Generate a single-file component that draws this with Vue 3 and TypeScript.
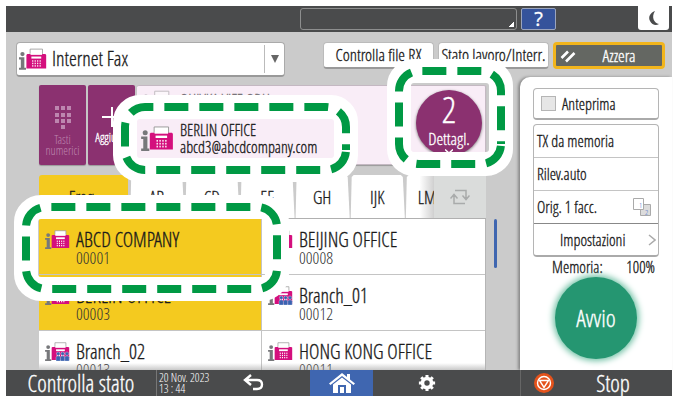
<script setup lang="ts">
import { ref, h, type FunctionalComponent } from 'vue'

interface Contact { name: string; code: string; group?: boolean; selected?: boolean }

const contacts: Contact[] = [
  { name: 'ABCD COMPANY', code: '00001', selected: true },
  { name: 'BEIJING OFFICE', code: '00008' },
  { name: 'BERLIN OFFICE', code: '00003', selected: true },
  { name: 'Branch_01', code: '00012', group: true },
  { name: 'Branch_02', code: '00013', group: true },
  { name: 'HONG KONG OFFICE', code: '00011' },
]
const tabs: string[] = ['AB', 'CD', 'EF', 'GH', 'IJK']
const modes: string[] = ['TX da memoria', 'Rilev.auto']
const preview = ref(false)
const line = ref('Internet Fax')

/* Fax machine with an "i" mark; group entries get three blue figures */
const FaxIcon: FunctionalComponent<{ group?: boolean }> = (props) => {
  const keys = [14.5, 17.5, 20.5].flatMap((y) =>
    [17, 20, 23, 26].map((x) => h('rect', { x: x - 1, y, width: 1.4, height: 1.8, fill: '#fff' })))
  const people = [18, 24, 30].flatMap((x) => [
    h('circle', { cx: x, cy: 16, r: 2.4, fill: '#3a62b0', stroke: '#fff', 'stroke-width': 0.4 }),
    h('path', { d: `M${x - 3} 26v-5q0-2 3-2t3 2v5z`, fill: '#3a62b0', stroke: '#fff', 'stroke-width': 0.4 }),
  ])
  return h('svg', { viewBox: '0 0 34 26', 'aria-hidden': 'true' }, [
    h('g', { fill: '#77787b' }, [
      h('circle', { cx: 4.2, cy: 7, r: 2.6 }),
      h('path', { d: 'M0 11h6.500v12.500h2v2.500H0v-2.500h2.200v-10H0z' }),
    ]),
    h('path', { d: 'M13.500 8V1h15v7', fill: '#fff', stroke: '#999', 'stroke-width': 1 }),
    h('path', { d: 'M10 7h22l1 1v16.500H9V8z', fill: '#d40f7d' }),
    h('path', { d: 'M14 6h14v2H14z', fill: '#fff' }),
    h('path', { d: 'M15 10h12v2.500H15z', fill: '#fff' }),
    ...keys,
    ...(props.group ? people : []),
  ])
}
FaxIcon.props = { group: Boolean }
</script>

<template>
  <main class="screen">
    <header class="top">
      <button class="message" aria-label="Messaggi"></button>
      <button class="help" aria-label="Guida">?</button>
      <button class="sleep" aria-label="Risparmio energia">
        <svg viewBox="0 0 12 16"><path d="M7 1C2 3 0 7 2 11s6 5 9 3C6 13 3 7 7 1z" fill="#4a4b4c" /></svg>
      </button>
    </header>

    <div class="actions">
      <label class="line">
        <FaxIcon />
        <select v-model="line" aria-label="Linea"><option>Internet Fax</option></select>
      </label>
      <div class="buttons">
        <button class="light">Controlla file RX</button>
        <button class="light">Stato lavoro/Interr.</button>
        <button class="reset">
          <svg viewBox="0 0 16 14"><path d="M1.500 9L8 2.500M6 12.500L14.500 4" stroke="#fff" stroke-width="2.600" /></svg>
          <span>Azzera</span>
        </button>
      </div>
    </div>

    <div class="body">
      <section class="work">
        <div class="dest">
          <button class="tile dim">
            <svg viewBox="0 0 18 24" class="pad">
              <path d="M1 0h4v4H1zM7 0h4v4H7zM13 0h4v4h-4zM1 7h4v4H1zM7 7h4v4H7zM13 7h4v4h-4zM1 13h4v4H1zM7 13h4v4H7zM13 13h4v4h-4zM7 19h4v4H7z" fill="#bd86af" />
            </svg>
            <span>Tasti<br />numerici</span>
          </button>
          <button class="tile">
            <svg viewBox="0 0 20 20" class="plus"><path d="M10 0v20M0 10h20" stroke="#fff" stroke-width="2" /></svg>
            <span>Aggiungi</span>
          </button>
          <div class="current">
            <div class="faded"><FaxIcon /><span>OHIVKA VIFE ODU</span></div>
            <button class="details">
              <b>2</b><span>Dettagl.</span>
              <svg viewBox="0 0 8 5"><path d="M0 .5l4 3.500 4-3.500" fill="none" stroke="#fff" stroke-width="1.500" /></svg>
            </button>
          </div>
        </div>

        <nav class="tabs">
          <button class="freq">Freq.</button>
          <button v-for="t in tabs" :key="t" class="tab">{{ t }}</button>
          <button class="tab last">LM</button>
          <button class="swap" aria-label="Cambia titolo">
            <svg viewBox="0 0 20 16" fill="none" stroke="#a9abab" stroke-width="1.500">
              <path d="M5 1.500h11v8M12.500 6.500l3.500 4 3.500-4M15 14.500H4v-8M.5 9.500L4 5.500l3.500 4" />
            </svg>
          </button>
        </nav>

        <div class="list">
          <button v-for="c in contacts" :key="c.code" class="contact" :class="{ selected: c.selected }">
            <FaxIcon :group="c.group" />
            <span class="name">{{ c.name }}</span>
            <span class="code">{{ c.code }}</span>
          </button>
        </div>
      </section>
      <div class="scroll"><i></i></div>

      <aside class="side">
        <label class="preview"><input v-model="preview" type="checkbox" />Anteprima</label>
        <div class="options">
          <button v-for="m in modes" :key="m">{{ m }}</button>
          <button>
            Orig. 1 facc.
            <svg viewBox="0 0 18 18" class="pages">
              <path d="M7.500 6.500h10v11h-10z" fill="#dcdcdc" stroke="#aaa" />
              <path d="M.5.5h10v11H.5z" fill="#fff" stroke="#aaa" />
              <text x="6" y="10" font-size="8" fill="#3f66c8">1</text>
              <text x="12" y="17" font-size="8" fill="#3f66c8">2</text>
            </svg>
          </button>
          <button class="settings">
            Impostazioni
            <svg viewBox="0 0 8 12" class="more"><path d="M1 1l6 5-6 5" fill="none" stroke="#aaa" stroke-width="1.500" /></svg>
          </button>
        </div>
        <p class="memory"><span>Memoria:</span><span>100%</span></p>
        <button class="start">Avvio</button>
      </aside>
    </div>

    <footer class="bottom">
      <button class="status">Controlla stato</button>
      <time class="date">20 Nov. 2023<br />13 : 44</time>
      <button class="back" aria-label="Indietro">
        <svg viewBox="0 0 22 18" fill="none" stroke="#fff" stroke-width="2.400"><path d="M9 1L3 6l6 5M3 6h12q5 0 5 4.500t-5 4.500h-4" /></svg>
      </button>
      <button class="home" aria-label="Home">
        <svg viewBox="0 0 26 20" fill="#fff">
          <path d="M13 0l5 4V1h3v5.500l5 4-1.500 1.500L13 3 1.500 12 0 10.500z" />
          <path d="M4 11.500L13 4.500l9 7V20h-5v-8H9v8H4zM11 14h4v6h-4z" />
        </svg>
      </button>
      <button class="gear" aria-label="Impostazioni">
        <svg viewBox="0 0 20 20">
          <circle cx="10" cy="10" r="5" fill="none" stroke="#fff" stroke-width="4" />
          <g stroke="#fff" stroke-width="3.400">
            <path d="M10 1v3M10 16v3M1 10h3M16 10h3M3.600 3.600l2.200 2.200M14.200 14.200l2.200 2.200M3.600 16.400l2.200-2.200M14.200 5.800l2.200-2.200" />
          </g>
        </svg>
      </button>
      <button class="stop">
        <svg viewBox="0 0 20 20">
          <circle cx="10" cy="10" r="10" fill="#e4521b" />
          <circle cx="10" cy="10" r="6.500" fill="none" stroke="#fff" stroke-width="1.400" />
          <path d="M5.500 7.500h9L10 14.500z" fill="none" stroke="#fff" stroke-width="1.400" />
        </svg>
        <span>Stop</span>
      </button>
    </footer>

    <div class="callout berlin">
      <svg width="245" height="87" aria-hidden="true">
        <rect x="12" y="12" width="221" height="63" rx="15" fill="#f9edf7" stroke="#fff" stroke-width="24" />
        <path class="dash" d="M233 55a20 20 0 0 1-20 20H32a20 20 0 0 1-20-20V32a20 20 0 0 1 20-20H213a20 20 0 0 1 20 20z" />
      </svg>
      <div class="magnified">
        <FaxIcon />
        <p>BERLIN OFFICE<br />abcd3@abcdcompany.com</p>
      </div>
    </div>
    <svg class="callout count" width="126" height="117" aria-hidden="true">
      <rect x="12" y="12" width="102" height="93" rx="15" fill="none" stroke="#fff" stroke-width="24" />
      <path class="dash" d="M114 85a20 20 0 0 1-20 20H32a20 20 0 0 1-20-20V32a20 20 0 0 1 20-20H94a20 20 0 0 1 20 20z" />
    </svg>
    <svg class="callout first" width="275" height="106" aria-hidden="true">
      <rect x="12" y="12" width="251" height="82" rx="15" fill="none" stroke="#fff" stroke-width="24" />
      <path class="dash" d="M263 74a20 20 0 0 1-20 20H32a20 20 0 0 1-20-20V32a20 20 0 0 1 20-20H243a20 20 0 0 1 20 20z" />
    </svg>
  </main>
</template>

<style>
body { background: #fff; }
</style>

<style scoped>
* { box-sizing: border-box; }
.screen {
  position: relative;
  display: flex;
  flex-direction: column;
  height: 100vh;
  padding: 6px 3px 4px 6px;
  font-family: 'Open Sans Condensed Light', 'Open Sans Condensed', 'Roboto Condensed', sans-serif;
  font-weight: 300;
  font-size: 16px;
  line-height: 20px;
  color: #1b1b1b;
  -webkit-text-stroke: 0.3px currentColor;
}
button, select, input { font: inherit; color: inherit; margin: 0; padding: 0; border: 0; background: none; }
p { margin: 0; }
svg { display: block; flex: none; }

.top { display: flex; height: 26px; padding-right: 3px; background: #4a4b4c; }
.message {
  position: relative;
  width: 217px; height: 22px; margin: 2px 4px 0 auto;
  border: 1px solid #8d8e8e; border-radius: 3px;
}
.message::after {
  content: ''; position: absolute; right: 2px; bottom: 2px;
  width: 5px; height: 5px;
  background: linear-gradient(135deg, transparent 50%, #fff 50%);
}
.help {
  width: 35px; height: 22px; margin: 2px 82px 0 0;
  border: 1px solid #9aa4bd; border-radius: 2px; background: #35539b; color: #fff;
  font-family: 'Open Sans', sans-serif; font-weight: 400; font-size: 20px; line-height: 20px;
}
.sleep { width: 31px; height: 24px; background: #fff; border-radius: 0 0 3px 3px; }
.sleep svg { width: 12px; height: 16px; margin: 0 auto; }

.actions {
  display: flex; justify-content: space-between; align-items: flex-start;
  height: 45px; padding: 10px 7px 0 10px; background: #cbcbcb;
}
.line {
  position: relative; display: flex; align-items: center;
  width: 269px; height: 35px; padding-left: 2px;
  border: 1px solid #aaa; border-bottom: 2px solid #999; border-radius: 4px; background: #fff;
}
.line svg { width: 28px; height: 22px; }
.line select { flex: 1; height: 100%; padding-left: 5px; font-size: 20px; appearance: none; }
.line::before { content: ''; position: absolute; right: 19px; top: 2px; bottom: 2px; border-left: 1px solid #bbb; }
.line::after {
  content: ''; position: absolute; right: 5px; top: 12px;
  border: solid transparent; border-width: 8px 4px 0; border-top-color: #666;
}
.buttons { display: flex; gap: 4px; }
.light, .reset { height: 27px; font-size: 17px; white-space: nowrap; border-radius: 4px; }
.light { width: 111px; border: 1px solid #bbb; border-bottom: 2px solid #999; background: #fff; }
.reset {
  display: flex; align-items: center; width: 112px; padding-left: 4px;
  border: 3px solid #f2b51c; background: #646762; color: #fff;
}
.reset svg { width: 16px; height: 14px; }
.reset span { flex: 1; text-align: center; }

.body { display: flex; flex: 1; min-height: 0; background: #cbcbcb; }
.work { display: flex; flex: 1; flex-direction: column; min-width: 0; padding: 8px 0 0 33px; }
.dest { display: flex; gap: 2px; height: 80px; }
.tile {
  display: flex; flex-direction: column; align-items: center; gap: 4px;
  width: 47px; padding-top: 21px;
  background: #8b3170; color: #fff; font-size: 12px; line-height: 11px;
  border-radius: 2px; box-shadow: 0 1px 1px #999;
}
.tile.dim { color: #bd86af; -webkit-text-stroke-width: 0; }
.pad { width: 18px; height: 24px; }
.plus { width: 20px; height: 22px; }
.current {
  position: relative; display: flex; flex: 1; justify-content: space-between; align-items: flex-start;
  padding: 4px 3px 0 5px; border: 1px solid #c4b8c2; border-width: 1px 1px 1px 0;
  background: #f9edf7; border-radius: 2px; box-shadow: 0 1px 1px #999;
}
.faded { display: flex; gap: 6px; opacity: .6; white-space: nowrap; }
.faded svg { width: 32px; height: 25px; }
.details {
  display: flex; flex-direction: column; align-items: center;
  width: 66px; height: 66px; border-radius: 50%;
  background: #8b3170; color: #fff; box-shadow: 0 1px 3px #777;
}
.details b { font-weight: inherit; font-size: 36px; line-height: 38px; padding-top: 1px; }
.details span { font-size: 17px; line-height: 20px; }
.details svg { width: 8px; height: 5px; }

.tabs { display: flex; height: 54px; padding-top: 10px; border-bottom: 1px solid #b0b0b0; font-size: 18px; }
.tabs button { min-width: 0; flex-basis: 0; }
.freq { flex-grow: 89; margin-right: 1px; background: #f4ca1f; border-radius: 3px 3px 0 0; }
.tab {
  flex-grow: 55; background: #fff;
  clip-path: polygon(2px 2px, 4px 0, calc(100% - 4px) 0, calc(100% - 2px) 2px, 100% 100%, 1px 100%);
}
.tab.last {
  flex-grow: 29; overflow: hidden; text-indent: 13px; text-align: left;
  clip-path: polygon(2px 2px, 4px 0, 100% 0, 100% 100%, 1px 100%);
  background: linear-gradient(90deg, #fff 50%, #d0d0d0);
}
.swap { flex-grow: 52; background: #dadcdb; }
.swap svg { width: 20px; height: 16px; margin: 0 auto; }

.list {
  position: relative; display: grid; flex: 1; grid-template-columns: 1fr 1fr; grid-auto-rows: 56px;
  min-height: 0; overflow: hidden; background: #fff; border-right: 1px solid #b5b5b5;
}
.list::after {
  content: ''; position: absolute; left: 0; right: 0; bottom: 0; height: 7px;
  background: linear-gradient(transparent, #9998);
}
.contact {
  display: grid; grid-template-columns: 31px 1fr; grid-template-rows: 19px 17px; align-content: start;
  padding: 11px 0 0 6px; text-align: left; border-bottom: 1px solid #c4c4c4; background: #fff;
}
.contact:nth-child(odd) { border-right: 1px solid #c4c4c4; }
.contact.selected { background: #f4ca1f; }
.contact svg { grid-row: 1 / 3; width: 25px; height: 19px; }
.name { font-size: 20px; line-height: 20px; }
.code { font-size: 17px; line-height: 17px; color: #333; -webkit-text-stroke-width: 0; }
.scroll { width: 34px; padding: 142px 0 0 8px; }
.scroll i { display: block; width: 3px; height: 49px; border-radius: 2px; background: #3f66b0; }

.side {
  display: flex; flex-direction: column; width: 152px; padding: 11px 13px 0;
  background: #fff; border-radius: 10px 0 0 0; box-shadow: -2px 0 3px #888;
}
.preview, .options { border: 1px solid #b5b5b5; border-bottom: 2px solid #aaa; border-radius: 4px; }
.preview { display: flex; align-items: center; gap: 6px; height: 32px; padding-left: 7px; }
.preview input { appearance: none; width: 15px; height: 15px; border: 1px solid #b5b5b5; background: #e6e6e6; }
.options { display: flex; flex-direction: column; margin-top: 4px; }
.options button {
  display: flex; align-items: center; justify-content: space-between;
  height: 33px; padding: 0 7px 0 3px; border-bottom: 1px solid #c4c4c4;
}
.options button:nth-child(3) { border-bottom-color: #888; }
.options .settings { height: 31px; padding: 0 2px 0 26px; border: 0; }
.pages { width: 18px; height: 18px; }
.more { width: 8px; height: 12px; }
.memory { display: flex; justify-content: space-between; padding: 0 4px 0 19px; }
.start {
  width: 82px; height: 82px; margin: 0 auto; border-radius: 50%; flex: none;
  background: #259671; color: #fff; font-size: 24px; box-shadow: 0 0 6px 2px #6fc0a4;
}

.bottom {
  display: grid; grid-template-columns: 151fr 54fr 83fr 16fr 63fr 108fr 39fr 152fr;
  height: 26px; background: #4a4b4c; color: #fff;
}
.bottom button { display: flex; align-items: center; justify-content: center; min-width: 0; }
.bottom .status { font-size: 23px; white-space: nowrap; border-right: 1px solid #777; }
.date { padding: 2px 0 0 2px; font-size: 12px; line-height: 11px; white-space: nowrap; -webkit-text-stroke-width: 0; }
.back svg { width: 22px; height: 18px; }
.home { grid-column: 5; background: #3f66b0; }
.home svg { width: 26px; height: 20px; }
.gear svg { width: 18px; height: 18px; }
.bottom .stop { grid-column: 8; justify-content: flex-start; padding-left: 13px; font-size: 23px; border-left: 1px solid #666; }
.stop svg { width: 20px; height: 20px; }
.stop span { flex: 1; }

.callout { position: absolute; pointer-events: none; }
.berlin { left: 113px; top: 95px; }
.count { left: 387px; top: 59px; }
.first { left: 14px; top: 195px; }
.dash { fill: none; stroke: #009944; stroke-width: 8; stroke-dasharray: 24 11; stroke-dashoffset: -2; }
.magnified {
  position: absolute; left: 24px; top: 24px; right: 24px; bottom: 24px;
  display: flex; align-items: center; gap: 6px; padding-left: 4px;
}
.magnified svg { width: 33px; height: 25px; }
.magnified p { font-size: 16px; line-height: 17px; white-space: nowrap; }
</style>
